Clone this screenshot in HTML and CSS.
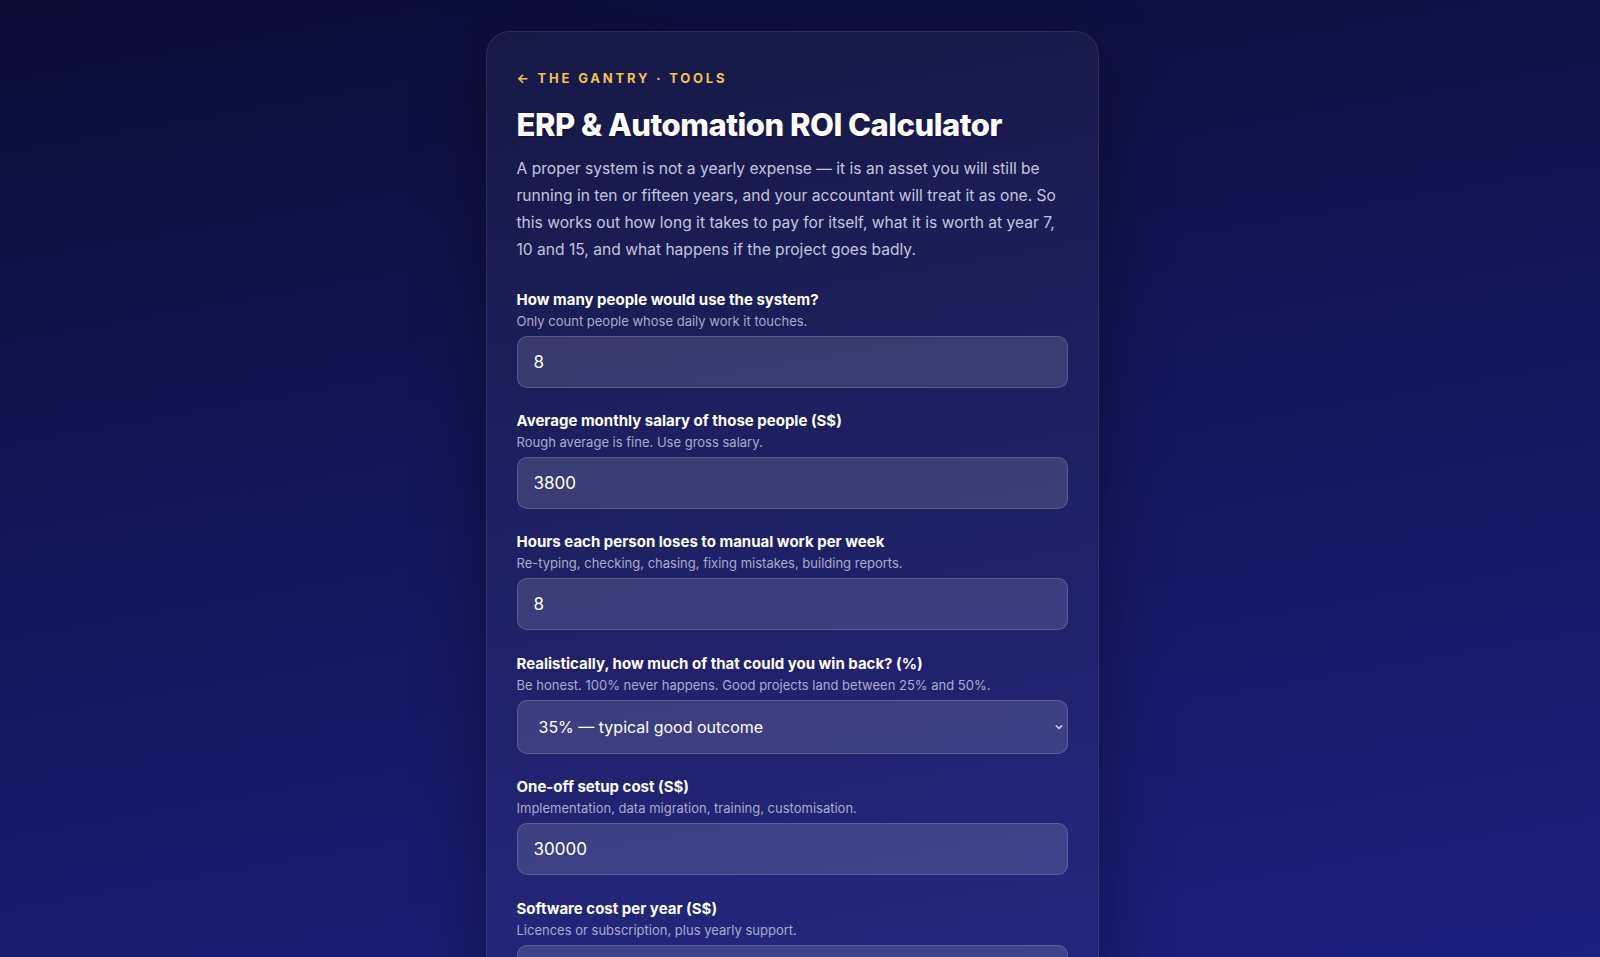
FILE: index.html
```html
<!DOCTYPE html>
<html lang="en">
  <head>
    <meta charset="UTF-8" />
    <meta name="viewport" content="width=device-width, initial-scale=1.0" />
    <title>ERP &amp; Automation ROI Calculator</title>
    <link rel="stylesheet" href="styles.css">
  </head>
  <body>
    <main class="card">
      <a class="eyebrow" href="#">&larr; The Gantry &middot; Tools</a>
      <h1 class="title">ERP &amp; Automation ROI Calculator</h1>
      <p class="intro">
        A proper system is not a yearly expense &mdash; it is an asset you will still be
        running in ten or fifteen years, and your accountant will treat it as one. So
        this works out how long it takes to pay for itself, what it is worth at year 7,
        10 and 15, and what happens if the project goes badly.
      </p>

      <div class="field">
        <label class="label" for="users">How many people would use the system?</label>
        <div class="hint">Only count people whose daily work it touches.</div>
        <input class="input" id="users" type="text" value="8" />
      </div>

      <div class="field">
        <label class="label" for="salary">Average monthly salary of those people (S$)</label>
        <div class="hint">Rough average is fine. Use gross salary.</div>
        <input class="input" id="salary" type="text" value="3800" />
      </div>

      <div class="field">
        <label class="label" for="hours">Hours each person loses to manual work per week</label>
        <div class="hint">Re-typing, checking, chasing, fixing mistakes, building reports.</div>
        <input class="input" id="hours" type="text" value="8" />
      </div>

      <div class="field">
        <label class="label" for="winback">Realistically, how much of that could you win back? (%)</label>
        <div class="hint">Be honest. 100% never happens. Good projects land between 25% and 50%.</div>
        <div class="select-wrap">
          <select class="input select" id="winback">
            <option>20% &mdash; cautious</option>
            <option selected>35% &mdash; typical good outcome</option>
            <option>50% &mdash; excellent project</option>
          </select>
          <svg class="chevron" width="10" height="10" viewBox="0 0 10 10">
            <path d="M2.2 3.8 L5 6.4 L7.8 3.8" fill="none" stroke="#cfd1ee" stroke-width="1.5" stroke-linecap="round" stroke-linejoin="round" />
          </svg>
        </div>
      </div>

      <div class="field">
        <label class="label" for="setup">One-off setup cost (S$)</label>
        <div class="hint">Implementation, data migration, training, customisation.</div>
        <input class="input" id="setup" type="text" value="30000" />
      </div>

      <div class="field">
        <label class="label" for="software">Software cost per year (S$)</label>
        <div class="hint">Licences or subscription, plus yearly support.</div>
        <input class="input" id="software" type="text" value="6000" />
      </div>

      <div class="field">
        <label class="label" for="life">How long will you run it? (years)</label>
        <div class="hint">Most mid-size systems stay in place for 10 to 15 years.</div>
        <input class="input" id="life" type="text" value="15" />
      </div>

      <div class="field">
        <label class="label" for="risk">What if the project goes badly?</label>
        <div class="hint">Setup cost overruns and savings arrive late.</div>
        <div class="select-wrap">
          <select class="input select" id="risk">
            <option selected>50% over budget, 12 months late</option>
          </select>
          <svg class="chevron" width="10" height="10" viewBox="0 0 10 10">
            <path d="M2.2 3.8 L5 6.4 L7.8 3.8" fill="none" stroke="#cfd1ee" stroke-width="1.5" stroke-linecap="round" stroke-linejoin="round" />
          </svg>
        </div>
      </div>

      <section class="results">
        <h2 class="results-title">What it works out to</h2>
        <div class="stats">
          <div class="stat"><div class="stat-label">Time saved per year</div><div class="stat-value">1,165 hrs</div></div>
          <div class="stat"><div class="stat-label">Value of that time</div><div class="stat-value">S$ 25,540</div></div>
          <div class="stat"><div class="stat-label">Pays for itself in</div><div class="stat-value">18 months</div></div>
          <div class="stat"><div class="stat-label">Net value at year 7</div><div class="stat-value">S$ 106,780</div></div>
          <div class="stat"><div class="stat-label">Net value at year 10</div><div class="stat-value">S$ 165,400</div></div>
          <div class="stat"><div class="stat-label">Net value at year 15</div><div class="stat-value">S$ 263,100</div></div>
        </div>
        <h2 class="results-title">If the project goes badly</h2>
        <div class="stats">
          <div class="stat"><div class="stat-label">Pays for itself in</div><div class="stat-value">41 months</div></div>
          <div class="stat"><div class="stat-label">Net value at year 7</div><div class="stat-value">S$ 55,240</div></div>
          <div class="stat"><div class="stat-label">Net value at year 10</div><div class="stat-value">S$ 113,860</div></div>
          <div class="stat"><div class="stat-label">Net value at year 15</div><div class="stat-value">S$ 211,560</div></div>
        </div>
        <p class="note">
          These figures are estimates. They only count time saved, not fewer mistakes,
          faster month-end close or better decisions, so the real return is usually higher.
        </p>
        <button class="btn">Talk to us about your numbers</button>
      </section>
    </main>
  </body>
</html>
```

FILE: styles.css
```css
body {
  margin: 0;
  padding: 31px 16px 60px 0;
  min-height: 100vh;
  background: linear-gradient(170deg, #0b0d35 0%, #131559 45%, #1d1f7e 100%) fixed;
  font-family: "Inter", "Noto Sans", sans-serif;
  color: #ffffff;
}

.card {
  display: flex;
  flex-direction: column;
  box-sizing: border-box;
  width: 613px;
  margin: 0 auto;
  padding: 37px 30px 40px;
  background: rgba(255, 255, 255, 0.045);
  border: 1px solid rgba(255, 255, 255, 0.08);
  border-radius: 24px;
  box-shadow: 0 24px 70px rgba(0, 0, 0, 0.35);
}

.eyebrow {
  font-size: 13px;
  line-height: 19px;
  font-weight: 700;
  letter-spacing: 2.8px;
  text-transform: uppercase;
  color: #f3c34f;
  text-decoration: none;
}

.title {
  margin: 18px 0 0;
  font-size: 31px;
  line-height: 38px;
  font-weight: 800;
  letter-spacing: -0.5px;
  color: #ffffff;
  text-shadow: 0 1px 2px rgba(0, 0, 0, 0.45);
}

.intro {
  margin: 12px 0 26px;
  font-size: 15.6px;
  line-height: 26.9px;
  color: #c3c5df;
}

.field {
  display: flex;
  flex-direction: column;
  margin-bottom: 23.4px;
}

.label {
  font-size: 15px;
  line-height: 20px;
  font-weight: 700;
  color: #ffffff;
}

.hint {
  margin-top: 2px;
  font-size: 13px;
  line-height: 18px;
  color: #a9abcd;
}

.input {
  box-sizing: border-box;
  width: 100%;
  height: 52px;
  margin-top: 6px;
  padding: 0 16px;
  background: rgba(255, 255, 255, 0.13);
  border: 1px solid rgba(255, 255, 255, 0.16);
  border-radius: 10px;
  font-family: inherit;
  font-size: 17px;
  color: #ffffff;
  outline: none;
}

.select-wrap {
  position: relative;
  display: flex;
  flex-direction: column;
}

.select {
  appearance: none;
  -webkit-appearance: none;
  height: 54px;
  padding-left: 21px;
  font-size: 16px;
  cursor: pointer;
}

.select option {
  color: #111;
}

.chevron {
  position: absolute;
  right: 4px;
  top: 28px;
}

.results {
  margin-top: 30px;
  padding-top: 30px;
  border-top: 1px solid rgba(255, 255, 255, 0.1);
}

.results-title {
  margin: 0 0 18px;
  font-size: 20px;
  font-weight: 700;
}

.stats {
  display: grid;
  grid-template-columns: 1fr 1fr;
  gap: 14px;
  margin-bottom: 34px;
}

.stat {
  padding: 22px 20px;
  background: rgba(255, 255, 255, 0.07);
  border: 1px solid rgba(255, 255, 255, 0.1);
  border-radius: 14px;
}

.stat-label {
  font-size: 13px;
  color: #a9abcd;
}

.stat-value {
  margin-top: 8px;
  font-size: 26px;
  font-weight: 800;
  color: #f3c34f;
}

.note {
  margin: 0 0 28px;
  font-size: 14px;
  line-height: 23px;
  color: #a9abcd;
}

.btn {
  height: 52px;
  border: none;
  border-radius: 10px;
  background: #f3c34f;
  color: #15175a;
  font-family: inherit;
  font-size: 16px;
  font-weight: 700;
  cursor: pointer;
}
```
